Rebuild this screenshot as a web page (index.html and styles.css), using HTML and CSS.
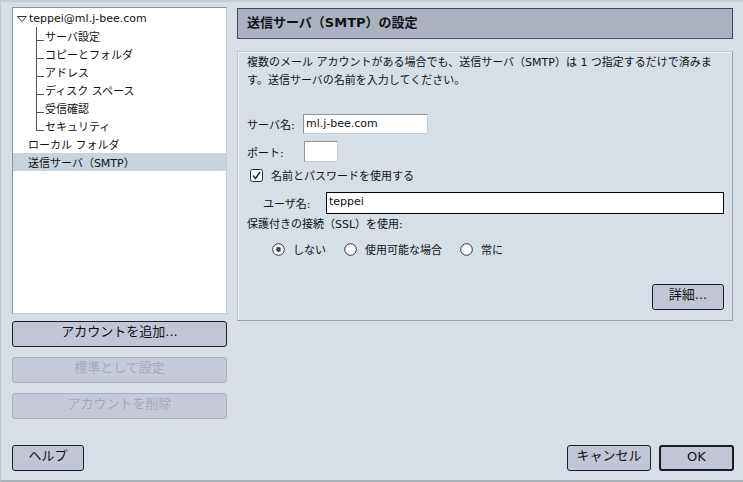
FILE: index.html
```html
<!DOCTYPE html>
<html lang="ja">
<head>
<meta charset="utf-8">
<link rel="stylesheet" href="styles.css">
</head>
<body>
<div class="window">
  <div class="main">
    <div class="left">
      <div class="tree">
        <div class="row account"><svg class="twisty" width="10" height="6" viewBox="0 0 10 6"><path d="M0.5 0.5 H9.5 L5 5.5 Z" fill="#fff" stroke="#2a3240" stroke-width="1"/></svg><span>teppei@ml.j-bee.com</span></div>
        <div class="row child"><span class="branch"></span><span>サーバ設定</span></div>
        <div class="row child"><span class="branch"></span><span>コピーとフォルダ</span></div>
        <div class="row child"><span class="branch"></span><span>アドレス</span></div>
        <div class="row child"><span class="branch"></span><span>ディスク スペース</span></div>
        <div class="row child"><span class="branch"></span><span>受信確認</span></div>
        <div class="row child last"><span class="branch"></span><span>セキュリティ</span></div>
        <div class="row top">ローカル フォルダ</div>
        <div class="row top selected">送信サーバ（SMTP）</div>
      </div>
      <button class="btn wide">アカウントを追加...</button>
      <button class="btn wide disabled">標準として設定</button>
      <button class="btn wide disabled">アカウントを削除</button>
    </div>
    <div class="right">
      <div class="header">送信サーバ（SMTP）の設定</div>
      <div class="content">
        <p class="desc">複数のメール アカウントがある場合でも、送信サーバ（SMTP）は 1 つ指定するだけで済みます。送信サーバの名前を入力してください。</p>
        <div class="field server"><span class="label">サーバ名:</span><span class="input server-input">ml.j-bee.com</span></div>
        <div class="field port"><span class="label">ポート:</span><span class="input port-input"></span></div>
        <div class="check"><svg width="13" height="13" viewBox="0 0 13 13"><rect x="0.5" y="0.5" width="12" height="12" rx="2" fill="#fff" stroke="#2a3240"/><path d="M3 6.5 L5.5 9.5 L10 3" fill="none" stroke="#2a3240" stroke-width="1.6"/></svg><span>名前とパスワードを使用する</span></div>
        <div class="field user"><span class="label">ユーザ名:</span><span class="input user-input">teppei</span></div>
        <div class="ssl">保護付きの接続（SSL）を使用:</div>
        <div class="radios">
          <span class="radio"><svg width="13" height="13" viewBox="0 0 13 13"><circle cx="6.5" cy="6.5" r="5.8" fill="#fff" stroke="#2a3240"/><circle cx="6.5" cy="6.5" r="2.4" fill="#3a4250"/></svg><span>しない</span></span>
          <span class="radio"><svg width="13" height="13" viewBox="0 0 13 13"><circle cx="6.5" cy="6.5" r="5.8" fill="#fff" stroke="#2a3240"/></svg><span>使用可能な場合</span></span>
          <span class="radio"><svg width="13" height="13" viewBox="0 0 13 13"><circle cx="6.5" cy="6.5" r="5.8" fill="#fff" stroke="#2a3240"/></svg><span>常に</span></span>
        </div>
        <div class="adv-row"><button class="btn adv">詳細...</button></div>
      </div>
    </div>
  </div>
  <div class="footer">
    <button class="btn help">ヘルプ</button>
    <div class="footer-right">
      <button class="btn cancel">キャンセル</button>
      <button class="btn ok">OK</button>
    </div>
  </div>
</div>
</body>
</html>
```

FILE: styles.css
```css
* { box-sizing: border-box; }
html, body { margin: 0; padding: 0; }
body {
  width: 743px;
  height: 482px;
  background: #d5dfe5;
  font-family: "DejaVu Sans", "Noto Sans CJK JP", sans-serif;
  font-size: 11px;
  color: #111;
  overflow: hidden;
}
.window {
  width: 743px;
  height: 482px;
  border-top: 2px solid #c6cdd2;
  border-left: 1px solid #c0c8ce;
  border-bottom: 2px solid #a9b1b8;
  padding: 5px 0 0 11px;
  display: flex;
  flex-direction: column;
}
.main { display: flex; gap: 10px; }
.left { width: 215px; display: flex; flex-direction: column; }
.tree {
  height: 307px;
  background: #fff;
  border: 1px solid #8c949c;
  border-right-color: #c8cfd4;
  border-bottom-color: #c8cfd4;
  padding-top: 1px;
}
.row {
  height: 18px;
  display: flex;
  align-items: center;
  white-space: nowrap;
}
.account { padding-left: 4px; }
.twisty { margin-right: 2px; margin-top: 2px; }
.child { padding-left: 23px; }
.branch {
  width: 8px;
  height: 18px;
  margin-right: 1px;
  background:
    linear-gradient(#555, #555) 0 0 / 1px 100% no-repeat,
    linear-gradient(#555, #555) 0 13px / 8px 1px no-repeat;
}
.last .branch {
  background:
    linear-gradient(#555, #555) 0 0 / 1px 14px no-repeat,
    linear-gradient(#555, #555) 0 13px / 8px 1px no-repeat;
}
.top { padding-left: 15px; }
.selected { background: #c8d3dc; }

.btn {
  font-family: "DejaVu Sans", "Noto Sans CJK JP", sans-serif;
  font-size: 13px;
  color: #111;
  background: #c2c5d5;
  border: 1px solid #1c1c24;
  border-radius: 3px;
  height: 26px;
  padding: 0 0 4px 0;
  margin: 0;
  line-height: 20px;
}
.wide { width: 215px; margin-top: 7px; }
.wide + .wide { margin-top: 10px; }
.disabled { color: #a3a9bb; border-color: #a8b0ba; background: #c6cad8; }

.right { width: 496px; margin-top: 1px; }
.header {
  height: 31px;
  background: #aab2c1;
  border: 1px solid #3c475a;
  border-bottom-color: #4a556a;
  padding-left: 9px;
  font-weight: bold;
  font-size: 13px;
  line-height: 28px;
  color: #111;
}
.content {
  margin-top: 12px;
  height: 270px;
  border: 1px solid #98a0a8;
  border-top-color: #c0c7cc;
  border-left-color: #c0c7cc;
  box-shadow: inset 1px 1px 0 #eef2f5;
  padding: 2px 8px 0 9px;
  display: flex;
  flex-direction: column;
}
.desc { margin: 0; line-height: 18px; width: 478px; }
.field { display: flex; align-items: center; }
.label { display: inline-block; }
.input {
  background: #fff;
  border: 1px solid #8d959c;
  border-right-color: #c8cfd4;
  border-bottom-color: #c8cfd4;
  height: 20px;
  line-height: 18px;
  padding-left: 2px;
}
.server { margin-top: 24px; }
.server .label { width: 56px; }
.server-input { width: 125px; }
.port { margin-top: 7px; }
.port .label { width: 57px; }
.port-input { width: 34px; height: 21px; }
.check { display: flex; align-items: center; height: 14px; margin-top: 6px; padding-left: 3px; }
.check svg { margin-right: 8px; }
.user { margin-top: 10px; padding-left: 16px; }
.user .label { width: 63px; }
.user-input { width: 398px; height: 22px; border: 1px solid #000; }
.ssl { margin-top: 4px; height: 14px; line-height: 14px; }
.radios { display: flex; align-items: center; height: 14px; margin-top: 10px; padding-left: 25px; }
.radio { display: flex; align-items: center; }
.radio svg { margin-right: 8px; }
.radio:nth-child(1) { width: 72px; }
.radio:nth-child(2) { width: 116px; }
.adv-row { display: flex; justify-content: flex-end; margin-top: 28px; }
.adv { width: 72px; height: 26px; }

.footer {
  margin-top: 26px;
  display: flex;
  justify-content: space-between;
  padding-right: 9px;
}
.help { width: 72px; }
.footer-right { display: flex; gap: 8px; }
.cancel { width: 84px; }
.ok { width: 75px; border-width: 2px; }
```
